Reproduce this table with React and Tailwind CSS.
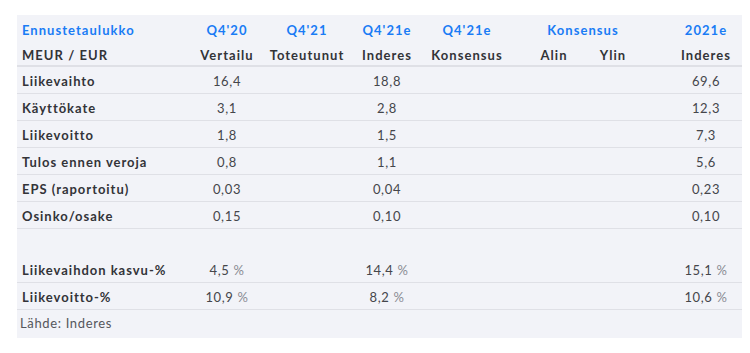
const cols = "grid grid-cols-[170px_80px_80px_80px_80px_17px_60px_58px_28px_72px] items-center"

const rows = [
  { label: "Liikevaihto", a: "16,4", c: "18,8", e: "69,6" },
  { label: "Käyttökate", a: "3,1", c: "2,8", e: "12,3" },
  { label: "Liikevoitto", a: "1,8", c: "1,5", e: "7,3" },
  { label: "Tulos ennen veroja", a: "0,8", c: "1,1", e: "5,6" },
  { label: "EPS (raportoitu)", a: "0,03", c: "0,04", e: "0,23" },
  { label: "Osinko/osake", a: "0,15", c: "0,10", e: "0,10" },
]

const pctRows = [
  { label: "Liikevaihdon kasvu-%", a: "4,5", c: "14,4", e: "15,1" },
  { label: "Liikevoitto-%", a: "10,9", c: "8,2", e: "10,6" },
]

function Pct({ v }) {
  return (
    <span>
      {v} <span className="text-[#8a8c93]">%</span>
    </span>
  )
}

function Row({ r, pct }) {
  return (
    <div className={`${cols} h-[27px] pt-[3px] border-b border-[#dfe0e6]`}>
      <div className="pl-[5px] font-bold tracking-[0.075em] text-[#333438]">{r.label}</div>
      <div className="text-center">{pct ? <Pct v={r.a} /> : r.a}</div>
      <div />
      <div className="text-center">{pct ? <Pct v={r.c} /> : r.c}</div>
      <div />
      <div />
      <div />
      <div />
      <div />
      <div className="text-center">{pct ? <Pct v={r.e} /> : r.e}</div>
    </div>
  )
}

export default function App() {
  return (
    <div className="w-[750px] h-[353px] bg-white pt-[15px] pl-[17px] font-['Lato',sans-serif] text-[13px] tracking-[0.05em] text-[#45464b]">
      <div className="w-[725px] bg-[#f2f3f8]">
        {/* header */}
        <div className={`${cols} h-[28px] pt-[4px] font-bold tracking-[0.08em] text-[#1a7cf5]`}>
          <div className="pl-[5px]">Ennustetaulukko</div>
          <div className="text-center">Q4'20</div>
          <div className="text-center">Q4'21</div>
          <div className="text-center">Q4'21e</div>
          <div className="text-center">Q4'21e</div>
          <div />
          <div className="col-span-2 text-center">Konsensus</div>
          <div />
          <div className="text-center">2021e</div>
        </div>
        <div className={`${cols} h-[24px] pt-[3px] border-b-2 border-[#dfe0e6] font-bold tracking-[0.08em] text-[#333438]`}>
          <div className="pl-[5px]">MEUR / EUR</div>
          <div className="text-center">Vertailu</div>
          <div className="text-center">Toteutunut</div>
          <div className="text-center">Inderes</div>
          <div className="text-center">Konsensus</div>
          <div />
          <div className="text-center">Alin</div>
          <div className="text-center">Ylin</div>
          <div />
          <div className="text-center">Inderes</div>
        </div>

        {rows.map((r) => (
          <Row key={r.label} r={r} />
        ))}

        <div className="h-[27px]" />

        {pctRows.map((r) => (
          <Row key={r.label} r={r} pct />
        ))}

        <div className="h-[28px] flex items-center pl-[3px] text-[#55565b]">Lähde: Inderes</div>
      </div>
    </div>
  )
}
